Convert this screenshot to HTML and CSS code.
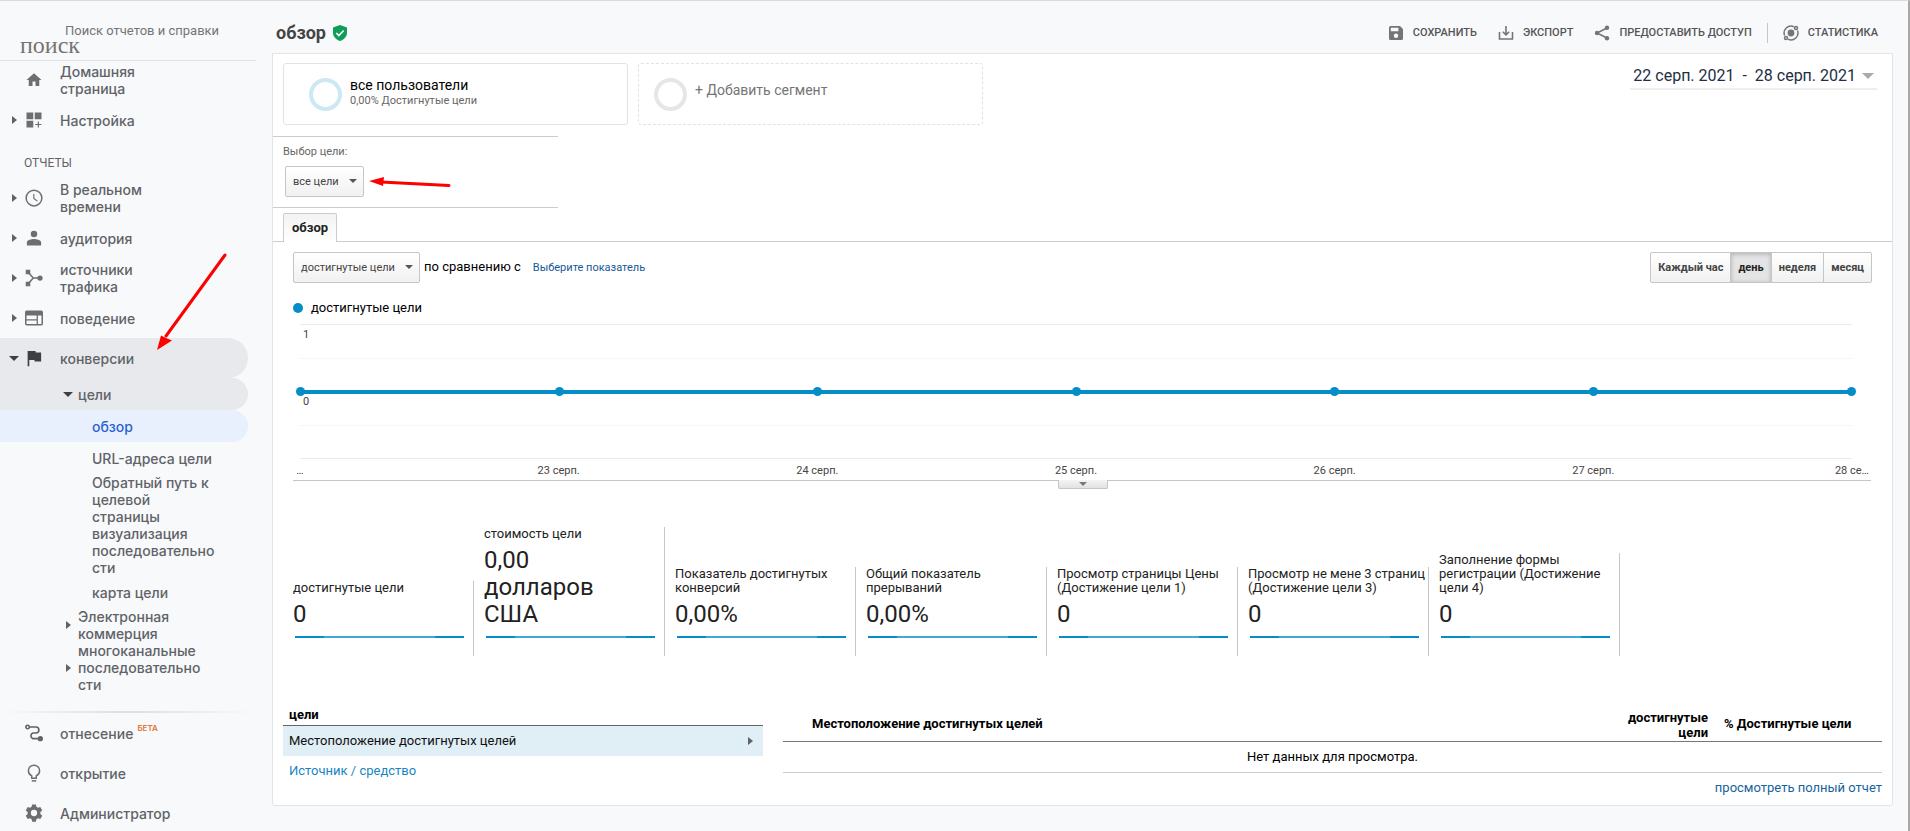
FILE: index.html
```html
<!DOCTYPE html>
<html lang="ru">
<head>
<meta charset="utf-8">
<title>Обзор целей</title>
<link rel="stylesheet" href="styles.css">
</head>
<body>
<div class="app">
  <aside class="sidebar">
    <div class="search">
      <input id="search" class="search-input" type="text" placeholder="Поиск отчетов и справки">
      <label for="search" class="search-label">поиск</label>
    </div>
    <nav class="nav">
      <a href="#" class="item"><span class="caret"></span>
        <svg class="icon" viewBox="0 0 24 24"><path d="M10 20v-6h4v6h5v-8h3L12 3 2 12h3v8z"/></svg>
        <span class="text">Домашняя страница</span></a>
      <a href="#" class="item"><span class="caret closed"></span>
        <svg class="icon" viewBox="0 0 24 24"><path d="M2 2h9v9H2zM13 2h9v9h-9zM2 13h9v9H2zM17 14h1.600v3.200H22v1.600h-3.400V22H17v-3.200h-3.400v-1.600H17z"/></svg>
        <span class="text">Настройка</span></a>
      <h2 class="group">ОТЧЕТЫ</h2>
      <a href="#" class="item"><span class="caret closed"></span>
        <svg class="icon" viewBox="0 0 24 24"><path d="M12 0.500a11.500 11.500 0 1 0 0 23 11.500 11.500 0 0 0 0-23zm0 21a9.500 9.500 0 1 1 0-19 9.500 9.500 0 0 1 0 19zM12.500 6.500H11v6.500l5 3.500.9-1.200-4.400-3.100z"/></svg>
        <span class="text">В реальном времени</span></a>
      <a href="#" class="item"><span class="caret closed"></span>
        <svg class="icon" viewBox="0 0 24 24"><path d="M12 11a4.300 4.300 0 1 0 0-8.600 4.300 4.300 0 0 0 0 8.600zm0 2.200c-3 0-9.500 1.400-9.500 4.300V22h19v-4.500c0-2.900-6.500-4.300-9.500-4.300z"/></svg>
        <span class="text">аудитория</span></a>
      <a href="#" class="item"><span class="caret closed"></span>
        <svg class="icon" viewBox="0 0 24 24"><path d="M1 1h6v6H1zM1 17h6v6H1zM20 8.500a3.500 3.500 0 1 1 0 7 3.500 3.500 0 0 1 0-7z"/><path d="M4 4l7 8h9M4 20l7-8" fill="none" stroke="currentColor" stroke-width="2"/></svg>
        <span class="text">источники трафика</span></a>
      <a href="#" class="item"><span class="caret closed"></span>
        <svg class="icon" viewBox="0 0 24 24"><path fill-rule="evenodd" d="M2.500 2h19A2.300 2.300 0 0 1 24 4.300v15.400a2.300 2.300 0 0 1-2.500 2.300h-19A2.300 2.300 0 0 1 0 19.700V4.300A2.300 2.300 0 0 1 2.500 2zM2 8.500v5h13.500v-5zm0 6.700V20h13.500v-4.800zM17.200 8.500V20H22V8.500z"/></svg>
        <span class="text">поведение</span></a>
      <a href="#" class="item open"><span class="caret opened"></span>
        <svg class="icon" viewBox="0 0 24 24"><path d="M14.400 4.500L14 2.500H3.500V23h2.200v-8.500h6.800l.4 2H21.500v-12z"/></svg>
        <span class="text">конверсии</span></a>
      <a href="#" class="item sub open"><span class="caret opened"></span><span class="text">цели</span></a>
      <a href="#" class="item leaf current"><span class="text">обзор</span></a>
      <a href="#" class="item leaf"><span class="text">URL-адреса цели</span></a>
      <a href="#" class="item leaf"><span class="text">Обратный путь к целевой страницы</span></a>
      <a href="#" class="item leaf"><span class="text">визуализация последовательно<wbr>сти</span></a>
      <a href="#" class="item leaf"><span class="text">карта цели</span></a>
      <a href="#" class="item sub"><span class="caret closed"></span><span class="text">Электронная коммерция</span></a>
      <a href="#" class="item sub"><span class="caret closed"></span><span class="text">многоканальные последовательно<wbr>сти</span></a>
      <hr class="rule">
      <a href="#" class="item"><span class="caret"></span>
        <svg class="icon dark" viewBox="0 0 24 24"><g fill="none" stroke="currentColor" stroke-width="2.200"><circle cx="3.500" cy="4" r="2.300"/><path d="M6 4h8.500a4 4 0 0 1 0 8h-4a4 4 0 0 0 0 7.500H20"/></g><circle cx="20.500" cy="19.500" r="3.500"/></svg>
        <span class="text">отнесение</span><sup class="beta">БЕТА</sup></a>
      <a href="#" class="item"><span class="caret"></span>
        <svg class="icon" viewBox="0 0 24 24"><path d="M9 21.500h6v2H9z"/><path d="M9 19v-3.200C6.300 14.500 4.500 12.200 4.500 9a7.500 7.500 0 0 1 15 0c0 3.200-1.800 5.500-4.500 6.800V19z" fill="none" stroke="currentColor" stroke-width="2"/></svg>
        <span class="text">открытие</span></a>
      <a href="#" class="item"><span class="caret"></span>
        <svg class="icon" viewBox="0 0 24 24"><path d="M9.500 0.500h5l.7 3.200 2.100 1.200 3.100-1 2.600 4.600-2.500 2.200v2.600l2.500 2.200-2.600 4.600-3.100-1-2.100 1.200-.7 3.200h-5l-.7-3.200-2.100-1.200-3.100 1L1 15.500l2.500-2.200v-2.600L1 8.500l2.600-4.600 3.100 1 2.100-1.200zM12 7.800a4.200 4.200 0 1 0 0 8.400 4.200 4.200 0 0 0 0-8.400z" fill-rule="evenodd"/></svg>
        <span class="text">Администратор</span></a>
    </nav>
  </aside>

  <main class="main">
    <header class="head">
      <h1 class="title">обзор</h1>
      <svg class="shield" viewBox="0 0 14 16"><path d="M7 0l7 2.600v5.200C14 11.600 11 14.800 7 16 3 14.800 0 11.600 0 7.800V2.600z" fill="#0f9d58"/><path d="M3.300 8l2.500 2.500 4.900-5" fill="none" stroke="#fff" stroke-width="1.600"/></svg>
      <div class="tools">
        <button class="tool"><svg viewBox="0 0 16 16"><path fill-rule="evenodd" d="M2.500 1H12l3 3v9.500a1.500 1.500 0 0 1-1.500 1.500h-11A1.500 1.500 0 0 1 1 13.500v-11A1.500 1.500 0 0 1 2.500 1zM2.800 2.800v3.400h7.600V2.800zM8 8.500a2.200 2.200 0 1 0 0 4.400 2.200 2.200 0 0 0 0-4.400z"/></svg>СОХРАНИТЬ</button>
        <button class="tool"><svg viewBox="0 0 16 16" fill="none" stroke="currentColor" stroke-width="1.600"><path d="M1.500 7v7h13V7M8 1v8.500M4.800 6.700L8 9.900l3.200-3.200"/></svg>ЭКСПОРТ</button>
        <button class="tool"><svg viewBox="0 0 16 16"><path d="M13 3L3 8l10 5" fill="none" stroke="currentColor" stroke-width="1.600"/><circle cx="13" cy="2.800" r="2.200"/><circle cx="3" cy="8" r="2.200"/><circle cx="13" cy="13.200" r="2.200"/></svg>ПРЕДОСТАВИТЬ ДОСТУП</button>
        <button class="tool last"><svg viewBox="0 0 16 16"><circle cx="8" cy="8" r="3.400"/><g fill="none" stroke="currentColor" stroke-width="1.500"><path d="M1.600 10.500A6.900 6.900 0 0 1 10.800 1.700M14.500 5.600A6.900 6.900 0 0 1 5.200 14.300"/><circle cx="13" cy="3" r="1.500"/><circle cx="3" cy="13" r="1.500"/></g></svg>СТАТИСТИКА</button>
      </div>
    </header>

    <section class="panel">
      <div class="segments">
        <button class="segment"><span class="ring blue"></span><span><span class="seg-name">все пользователи</span><span class="seg-sub">0,00% Достигнутые цели</span></span></button>
        <button class="segment add"><span class="ring"></span><span class="seg-add">+ Добавить сегмент</span></button>
        <button class="dates"><span>22 серп. 2021&nbsp; -&nbsp; 28 серп. 2021</span><span class="down"></span></button>
      </div>

      <div class="goal">
        <label for="goal">Выбор цели:</label>
        <span class="drop"><select id="goal" class="goal-select"><option>все цели</option></select></span>
      </div>

      <div class="tabs"><button class="tab">обзор</button></div>

      <div class="controls">
        <span class="drop"><select class="metric-select" aria-label="Показатель"><option>достигнутые цели</option></select></span>
        <span class="versus">по сравнению с</span>
        <a href="#" class="pick">Выберите показатель</a>
        <div class="periods">
          <button>Каждый час</button><button class="on">день</button><button>неделя</button><button>месяц</button>
        </div>
      </div>

      <div class="legend"><span class="dot"></span>достигнутые цели</div>

      <div class="chart">
        <div class="plot">
          <div class="band"><span class="value">1</span></div>
          <div class="band soft"></div>
          <div class="band zero"><span class="value">0</span></div>
          <div class="band soft"></div>
          <div class="series"><i></i><i></i><i></i><i></i><i></i><i></i><i></i></div>
        </div>
        <div class="ticks"><span>…</span><span>23 серп.</span><span>24 серп.</span><span>25 серп.</span><span>26 серп.</span><span>27 серп.</span><span>28 се…</span></div>
        <button class="handle" aria-label="Развернуть"></button>
      </div>

      <div class="metrics">
        <div class="metric"><span class="name">достигнутые цели</span><span class="num">0</span><span class="spark"></span></div>
        <div class="metric"><span class="name">стоимость цели</span><span class="num">0,00 долларов США</span><span class="spark"></span></div>
        <div class="metric"><span class="name">Показатель достигнутых конверсий</span><span class="num">0,00%</span><span class="spark"></span></div>
        <div class="metric"><span class="name">Общий показатель прерываний</span><span class="num">0,00%</span><span class="spark"></span></div>
        <div class="metric"><span class="name">Просмотр страницы Цены (Достижение цели 1)</span><span class="num">0</span><span class="spark"></span></div>
        <div class="metric"><span class="name">Просмотр не мене 3 страниц (Достижение цели 3)</span><span class="num">0</span><span class="spark"></span></div>
        <div class="metric"><span class="name">Заполнение формы регистрации (Достижение цели 4)</span><span class="num">0</span><span class="spark"></span></div>
      </div>

      <div class="details">
        <div class="dims">
          <h3>цели</h3>
          <a href="#" class="dim active">Местоположение достигнутых целей<span class="caret closed"></span></a>
          <a href="#" class="dim">Источник / средство</a>
        </div>
        <div class="report">
          <table>
            <thead><tr><th class="c1">Местоположение достигнутых целей</th><th class="c2">достигнутые цели</th><th class="c3">% Достигнутые цели</th></tr></thead>
            <tbody><tr><td colspan="3">Нет данных для просмотра.</td></tr></tbody>
          </table>
          <a href="#" class="full">просмотреть полный отчет</a>
        </div>
      </div>
    </section>
  </main>
</div>
<svg class="arrow a1" viewBox="0 0 72 100"><path d="M69 3L10 84" stroke="#f00" stroke-width="3" stroke-linecap="round"/><path d="M1 98L5 83.500L10 86L16 88.500z" fill="#f00"/></svg>
<svg class="arrow a2" viewBox="0 0 84 12"><path d="M12 5L80 8.500" stroke="#f00" stroke-width="3" stroke-linecap="round"/><path d="M0 4L15 0L14 9z" fill="#f00"/></svg>
</body>
</html>
```

FILE: styles.css
```css
* { box-sizing: border-box; }
body {
  margin: 0;
  background: #f8f9fb;
  font: 13px/16px Roboto, "Liberation Sans", sans-serif;
  color: #222;
  position: relative;
}
a { text-decoration: none; color: inherit; }
button, select, input { font: inherit; color: inherit; margin: 0; }
button { cursor: pointer; background: none; border: 0; padding: 0; }
h1, h2, h3 { margin: 0; }

.app {
  display: flex;
  min-height: 100vh;
  border-top: 1px solid #d8dadd;
  border-right: 2px solid #a8a8a8;
}

/* Sidebar */
.sidebar { width: 272px; flex: none; }
.search {
  width: 256px;
  height: 60px;
  padding-top: 20px;
  border-bottom: 1px solid #e0e2e5;
  display: flex;
  flex-direction: column;
}
.search-input {
  margin-left: 65px;
  height: 18px;
  padding: 0;
  border: 0;
  background: none;
  color: #757575;
}
.search-input::placeholder { color: #757575; opacity: 1; }
.search-label {
  margin-left: 20px;
  font: 24px/12px "Liberation Serif", serif;
  color: #757575;
}
.nav { margin-top: -1px; }
.item {
  display: flex;
  align-items: center;
  width: 248px;
  min-height: 40px;
  padding-left: 12px;
  font: 500 14px/17px Inter, "Open Sans", sans-serif;
  color: #5f6368;
  border-radius: 0 20px 20px 0;
}
.item .text { max-width: 120px; }
.caret { width: 12px; flex: none; display: flex; align-items: center; }
.closed::before {
  content: "";
  border-left: 5px solid #5f6368;
  border-top: 4px solid transparent;
  border-bottom: 4px solid transparent;
}
.opened::before {
  content: "";
  border-top: 5px solid #3c4043;
  border-left: 5px solid transparent;
  border-right: 5px solid transparent;
}
.icon {
  width: 18px;
  height: 18px;
  margin: 0 17px 0 1px;
  flex: none;
  fill: currentColor;
  color: #6e6e6e;
}
.icon.dark { color: #5f6368; }
.group {
  padding: 19px 24px 11px;
  font-size: 12px;
  font-weight: 400;
  line-height: 8px;
  color: #5f6368;
}
.open { background: #e8e9ec; padding-left: 9px; }
.open .caret { width: 15px; }
.open .icon { color: #3c4043; }
.sub { min-height: 32px; padding-left: 66px; }
.sub.open { padding-left: 63px; }
.leaf { min-height: 32px; padding-left: 92px; }
.item.sub .text, .item.leaf .text { max-width: 126px; }
.current { background: #e8f0fe; color: #2a62d0; }
.rule {
  margin: 18px 0 0;
  width: 256px;
  height: 2px;
  border: 0;
  background: linear-gradient(90deg, transparent, #dcdee0 50%, transparent);
}
.beta { margin: 0 0 10px 4px; font: 600 8px/10px Inter, sans-serif; color: #e37433; }

/* Header */
.main { flex: 1; min-width: 0; margin-right: 15px; }
.head { height: 52px; display: flex; align-items: center; padding: 12px 15px 0 4px; }
.title { font-size: 18px; line-height: 20px; font-weight: 700; color: #444; }
.shield { width: 14px; height: 16px; margin-left: 7px; }
.tools { margin-left: auto; display: flex; align-items: center; }
.tool {
  display: flex;
  align-items: center;
  gap: 9px;
  margin-left: 21px;
  height: 20px;
  font-size: 11px;
  font-weight: 500;
  color: #555;
}
.tool svg { width: 16px; height: 16px; fill: currentColor; color: #757575; }
.tool svg[fill="none"] { fill: none; }
.tool.last { margin-left: 15px; padding-left: 15px; border-left: 1px solid #c4c6c8; }

/* Panel */
.panel {
  background: #fff;
  border: 1px solid #e2e4e6;
  border-radius: 0 0 3px 3px;
  padding-bottom: 9px;
}
.segments { display: flex; gap: 10px; padding: 9px 15px 11px 10px; }
.segment {
  width: 345px;
  height: 62px;
  border: 1px solid #e2e2e2;
  border-radius: 3px;
  padding-left: 25px;
  display: flex;
  align-items: center;
  gap: 8px;
  text-align: left;
}
.segment.add { border-style: dashed; padding-left: 15px; }
.ring { width: 33px; height: 33px; border: 4px solid #e6e6e6; border-radius: 50%; }
.ring.blue { border-color: #cde8f5; }
.seg-name { display: block; font-size: 14px; line-height: 16px; color: #000; margin-top: -2px; }
.seg-sub { display: block; font-size: 11px; line-height: 16px; color: #666; }
.seg-add { font-size: 14px; color: #757575; margin-bottom: 8px; }
.dates {
  margin-left: auto;
  align-self: flex-start;
  display: flex;
  align-items: center;
  gap: 6px;
  height: 27px;
  padding: 0 3px;
  border-bottom: 2px solid #eee;
  font-size: 16px;
  color: #222e44;
}
.down { border-top: 6px solid #aaa; border-left: 6px solid transparent; border-right: 6px solid transparent; }
.goal {
  width: 285px;
  height: 72px;
  border-top: 1px solid #ccc;
  border-bottom: 1px solid #ccc;
  padding: 7px 10px;
  font-size: 11px;
  color: #666;
  display: flex;
  flex-direction: column;
  align-items: flex-start;
  gap: 6px;
}
.goal .drop { margin-left: 2px; }
.drop { position: relative; display: inline-block; }
.drop select {
  appearance: none;
  display: block;
  height: 31px;
  border: 1px solid #c6c6c6;
  border-radius: 2px;
  background: linear-gradient(#fff, #f1f1f1);
  padding: 0 8px 0 7px;
  font-size: 11px;
  color: #444;
}
.drop::after {
  content: "";
  position: absolute;
  right: 7px;
  top: 13px;
  border-top: 4px solid #555;
  border-left: 4px solid transparent;
  border-right: 4px solid transparent;
  pointer-events: none;
}
.goal-select { width: 79px; }
.metric-select { width: 127px; }
.tabs { margin-top: 5px; height: 29px; padding-left: 10px; border-bottom: 1px solid #ccc; display: flex; }
.tab {
  height: 29px;
  padding: 0 8px;
  border: 1px solid #ccc;
  border-bottom: 0;
  border-radius: 2px 2px 0 0;
  background: linear-gradient(#f3f3f3, #fff);
  font-weight: 700;
}
.controls { display: flex; align-items: center; padding: 10px 20px 0; }
.versus { margin: 0 12px 2px 4px; color: #000; }
.pick { font-size: 11px; color: #15589a; }
.periods {
  margin-left: auto;
  display: flex;
  height: 31px;
  border: 1px solid #c6c6c6;
  border-radius: 2px;
  background: linear-gradient(#fff, #f1f1f1);
}
.periods button { padding: 0 7px; font-size: 11px; font-weight: 700; color: #444; border-left: 1px solid #c6c6c6; }
.periods button:first-child { border-left: 0; }
.periods .on { color: #222; background: #e4e4e4; box-shadow: inset 0 1px 4px rgba(0, 0, 0, .25); }
.legend { display: flex; align-items: center; gap: 8px; padding: 17px 20px 8px; color: #000; }
.dot { width: 10px; height: 10px; border-radius: 50%; background: #058dc7; }

/* Chart */
.chart { margin: 0 21px 0 20px; border-bottom: 1px solid #c6c6c6; position: relative; }
.plot { margin: 0 19px 0 7px; border-bottom: 1px solid #eaeaea; position: relative; }
.band { height: 34px; border-top: 1px solid #eaeaea; padding: 1px 3px; color: #444; }
.band.soft { border-color: #f6f6f6; height: 33px; }
.value { font-size: 11px; }
.series {
  position: absolute;
  left: -4px;
  right: -4px;
  top: 63px;
  height: 9px;
  display: flex;
  justify-content: space-between;
  background: linear-gradient(#058dc7, #058dc7) center / calc(100% - 8px) 4px no-repeat;
}
.series i { width: 9px; height: 9px; border-radius: 50%; background: #058dc7; }
.ticks {
  display: flex;
  justify-content: space-between;
  margin: 0 19px 0 7px;
  height: 21px;
  line-height: 23px;
  font-size: 11px;
  color: #444;
}
.ticks span { width: 0; display: flex; justify-content: center; white-space: nowrap; }
.handle {
  position: absolute;
  top: 100%;
  left: calc(50% - 24px);
  width: 50px;
  height: 9px;
  border: 1px solid #c6c6c6;
  border-top: 0;
  border-radius: 0 0 2px 2px;
  background: linear-gradient(#f4f4f4, #e2e2e2);
  display: flex;
  justify-content: center;
  align-items: center;
}
.handle::before { content: ""; border-top: 4px solid #777; border-left: 4px solid transparent; border-right: 4px solid transparent; }

/* Metrics */
.metrics { display: flex; align-items: flex-end; padding: 46px 10px 0; }
.metric {
  width: 191px;
  padding: 0 0 18px 10px;
  border-right: 1px solid #c6c6c6;
  display: flex;
  flex-direction: column;
}
.name { line-height: 14px; }
.num { margin: 6px 30px 8px 0; font-size: 24px; line-height: 27px; }
.spark {
  margin: 0 9px 0 2px;
  height: 2px;
  background: linear-gradient(90deg, #058dc7 17%, #43a8d6 17% 83%, #058dc7 83%);
}

/* Details */
.details { display: flex; gap: 20px; padding: 48px 10px 0; }
.dims { width: 480px; flex: none; }
.dims h3 { padding: 3px 6px 2px; font-size: 13px; line-height: 16px; color: #000; border-bottom: 1px solid #666; }
.dim { display: flex; align-items: center; justify-content: space-between; height: 30px; padding: 0 6px; color: #1a85c2; }
.dim.active { background: #e0eef5; color: #111; }
.dim .caret { width: 9px; }
.report { flex: 1; padding-top: 3px; display: flex; flex-direction: column; color: #000; }
table { width: 100%; border-collapse: collapse; }
th { height: 34px; padding: 0; line-height: 15px; border-bottom: 1px solid #777; text-align: left; }
.c1 { padding-left: 29px; }
.c2 { width: 110px; padding: 3px 16px 0 0; text-align: right; }
.c3 { width: 158px; }
td { height: 31px; padding: 0; text-align: center; border-bottom: 1px solid #ccc; }
.full { align-self: flex-end; padding: 7px 0 0; color: #15639c; }

/* Pointer annotations */
.arrow { position: absolute; fill: none; }
.a1 { left: 156px; top: 252px; width: 72px; height: 100px; }
.a2 { left: 369px; top: 177px; width: 84px; height: 12px; }
```
